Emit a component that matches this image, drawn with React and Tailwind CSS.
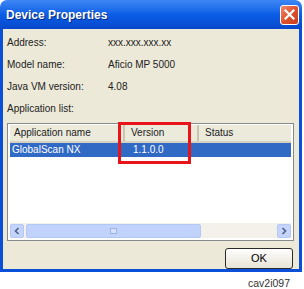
export default function App() {
  const font = { fontFamily: '"Liberation Sans", Arial, sans-serif' };
  return (
    <div className="w-[304px] h-[289px] bg-white flex flex-col" style={font}>
      <div className="w-[302px] flex flex-col">
        {/* Title bar */}
        <div className="h-[29px] rounded-t-[7px] bg-gradient-to-b from-[#3d86f4] via-[#0a5ee6] to-[#0848cc] flex items-center pl-[6px] pr-[2px]">
          <span className="text-white font-bold text-[12px] [text-shadow:1px_1px_0_#0a2a80]">Device Properties</span>
          <div className="ml-auto mr-[1px] w-[19px] h-[20px] rounded-[3px] border border-white bg-gradient-to-br from-[#f08a6a] via-[#e0512d] to-[#c8401c] flex items-center justify-center">
            <svg width="11" height="11" viewBox="0 0 11 11">
              <path d="M1.5 1.5 L9.5 9.5 M9.5 1.5 L1.5 9.5" stroke="white" strokeWidth="2.2" strokeLinecap="square" />
            </svg>
          </div>
        </div>
        {/* Body */}
        <div className="h-[243px] bg-[#ECE9D8] border-x-[3px] border-b-[3px] border-[#0a4fd8] flex flex-col pl-[4px] pr-[6px] pt-[3px] text-[10px] text-[#222]">
          <div className="h-[22px] flex items-center">
            <span className="w-[101px]">Address:</span>
            <span>xxx.xxx.xxx.xx</span>
          </div>
          <div className="h-[22px] flex items-center">
            <span className="w-[101px]">Model name:</span>
            <span>Aficio MP 5000</span>
          </div>
          <div className="h-[22px] flex items-center">
            <span className="w-[101px]">Java VM version:</span>
            <span>4.08</span>
          </div>
          <div className="h-[22px] flex items-center">
            <span>Application list:</span>
          </div>
          {/* List box */}
          <div className="mt-[3px] h-[119px] w-[287px] bg-white border border-[#868a8e] flex flex-col relative px-[2px] pt-[1px]">
            <div className="h-[18px] flex bg-[#EBEADB] border-b-[2px] border-[#d6d2c2] text-[10px]">
              <div className="w-[115px] pl-[4px] flex items-center border-r-[2px] border-[#c7c5b2]">Application name</div>
              <div className="w-[74px] pl-[6px] flex items-center border-r-[2px] border-[#c7c5b2]">Version</div>
              <div className="flex-1 pl-[6px] flex items-center">Status</div>
            </div>
            <div className="h-[14px] flex bg-[#316AC5] text-white">
              <div className="w-[117px] pl-[2px] flex items-center">GlobalScan NX</div>
              <div className="w-[74px] pl-[6px] flex items-center">1.1.0.0</div>
            </div>
            <div className="flex-1" />
            {/* Scrollbar */}
            <div className="h-[15px] mb-[2px] flex items-center bg-[#F3F1EA] gap-[2px]">
              <div className="w-[14px] h-[14px] rounded-[2px] bg-[#c4d4fa] border border-[#b4c8f6] flex items-center justify-center">
                <svg width="6" height="8" viewBox="0 0 6 8"><path d="M4.5 1 L1.5 4 L4.5 7" stroke="#4d6185" strokeWidth="1.6" fill="none" /></svg>
              </div>
              <div className="w-[175px] h-[14px] rounded-[2px] bg-[#c1d2fb] border border-[#b4c8f6] flex items-center justify-center">
                <div className="w-[7px] h-[6px] border border-[#9cb2e8] bg-[#d6e2fc]" />
              </div>
              <div className="flex-1" />
              <div className="w-[14px] h-[14px] rounded-[2px] bg-[#c4d4fa] border border-[#b4c8f6] flex items-center justify-center">
                <svg width="6" height="8" viewBox="0 0 6 8"><path d="M1.5 1 L4.5 4 L1.5 7" stroke="#4d6185" strokeWidth="1.6" fill="none" /></svg>
              </div>
            </div>
            {/* Red highlight */}
            <div className="absolute left-[110px] top-[-2px] w-[73px] h-[42px] border-[3px] border-[#e8141a]" />
          </div>
          <div className="mt-[7px] flex justify-end">
            <div className="w-[68px] h-[21px] rounded-[3px] border border-[#2b2b2b] bg-gradient-to-b from-[#ffffff] to-[#e6e3d6] flex items-center justify-center text-[11px] text-black">OK</div>
          </div>
        </div>
      </div>
      <div className="flex justify-end pr-[14px] mt-[4px] text-[10.5px] text-[#333]">cav2i097</div>
    </div>
  );
}
